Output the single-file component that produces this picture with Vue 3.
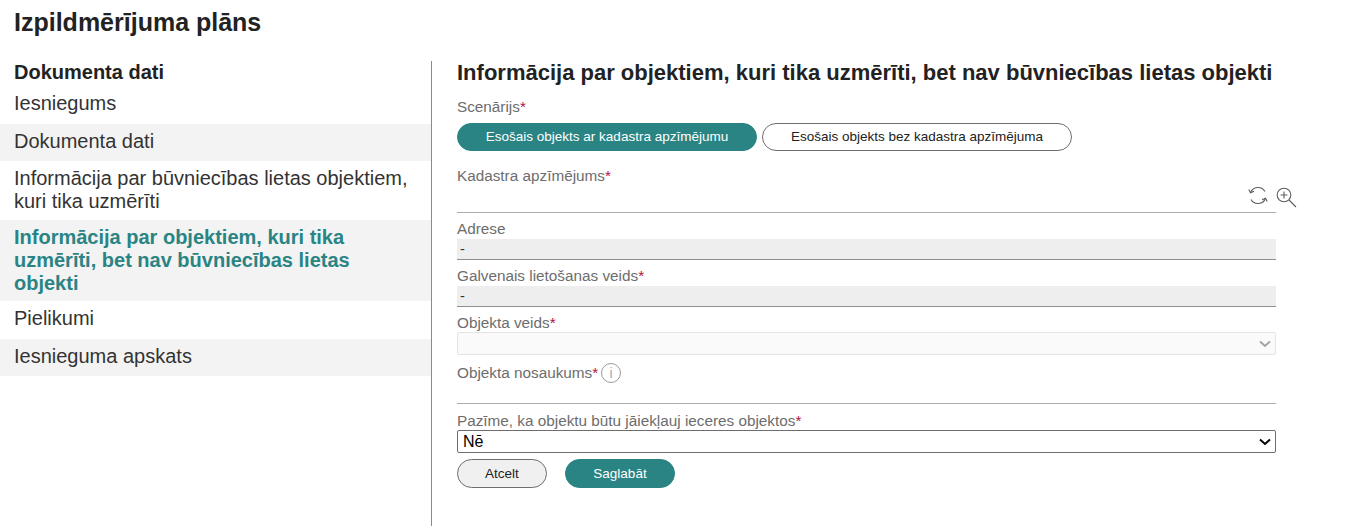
<script setup>
const menu = [
  { text: 'Dokumenta dati', cls: 'h37 shade' },
  { text: 'Informācija par būvniecības lietas objektiem, kuri tika uzmērīti', cls: 'h59' },
  { text: 'Informācija par objektiem, kuri tika uzmērīti, bet nav būvniecības lietas objekti', cls: 'h81 shade active' },
  { text: 'Pielikumi', cls: 'h38' },
  { text: 'Iesnieguma apskats', cls: 'h37 shade' },
]
</script>

<template>
  <div class="page">
    <h1 class="title">Izpildmērījuma plāns</h1>
    <div class="columns">
      <aside class="side">
        <div class="side-head">Dokumenta dati</div>
        <div class="side-first">Iesniegums</div>
        <div v-for="m in menu" :key="m.text" class="item" :class="m.cls">{{ m.text }}</div>
      </aside>
      <main class="main">
        <h2 class="heading">Informācija par objektiem, kuri tika uzmērīti, bet nav būvniecības lietas objekti</h2>
        <div class="label l-scen">Scenārijs<span class="req">*</span></div>
        <div class="pills">
          <button class="pill on">Esošais objekts ar kadastra apzīmējumu</button>
          <button class="pill">Esošais objekts bez kadastra apzīmējuma</button>
        </div>
        <div class="label l-kad">Kadastra apzīmējums<span class="req">*</span></div>
        <div class="line-field kad">
          <div class="tools">
            <svg width="20" height="20" viewBox="0 0 20 20" fill="none" stroke="#5c5c5c" stroke-width="1.1">
              <path d="M2.5 6.8A8 8 0 0 1 17 5.6" />
              <path d="M17.5 12.2A8 8 0 0 1 3 13.4" />
              <path d="M0.8 3.5L2.5 6.8L6 5.2" />
              <path d="M19.2 15.5L17.5 12.2L14 13.8" />
            </svg>
            <svg class="zoom" width="21" height="21" viewBox="0 0 21 21" fill="none" stroke="#5c5c5c" stroke-width="1.1">
              <circle cx="8" cy="8" r="6.8" />
              <path d="M8 4.6V11.4M4.6 8H11.4" />
              <path d="M13 13L20 20" />
            </svg>
          </div>
        </div>
        <div class="label l-adr">Adrese</div>
        <div class="readonly">-</div>
        <div class="label l-gal">Galvenais lietošanas veids<span class="req">*</span></div>
        <div class="readonly">-</div>
        <div class="label l-veids">Objekta veids<span class="req">*</span></div>
        <div class="disabled-select">
          <svg width="12" height="8" viewBox="0 0 12 8" fill="none" stroke="#a3a3a3" stroke-width="2"><path d="M1 1.5L6 6L11 1.5" /></svg>
        </div>
        <div class="label l-nos">
          Objekta nosaukums<span class="req">*</span>
          <span class="info">i</span>
        </div>
        <div class="line-field nos"></div>
        <div class="label l-paz">Pazīme, ka objektu būtu jāiekļauj ieceres objektos<span class="req">*</span></div>
        <div class="select">
          <span>Nē</span>
          <svg width="12" height="8" viewBox="0 0 12 8" fill="none" stroke="#000" stroke-width="2"><path d="M1 1.5L6 6L11 1.5" /></svg>
        </div>
        <div class="actions">
          <button class="btn">Atcelt</button>
          <button class="btn save">Saglabāt</button>
        </div>
      </main>
    </div>
  </div>
</template>

<style>
html, body { margin: 0; background: #fff; }
</style>

<style scoped>
.page {
  height: 526px;
  overflow: hidden;
  font-family: "Liberation Sans", Arial, sans-serif;
  color: #222;
  box-sizing: border-box;
  display: flex;
  flex-direction: column;
}
.title {
  margin: 0;
  padding: 8px 0 0 14px;
  height: 53px;
  box-sizing: border-box;
  font-size: 25px;
  line-height: 28px;
  font-weight: 700;
}
.columns { display: flex; flex: 1; }
.side { width: 431px; flex: none; padding-top: 0; }
.side-head {
  padding: 8px 14px 0;
  height: 31px;
  box-sizing: border-box;
  font-size: 20px;
  line-height: 22px;
  font-weight: 700;
}
.side-first {
  padding: 7px 14px 0;
  height: 33px;
  font-size: 20px;
  line-height: 24px;
  color: #333;
}
.item {
  padding: 6px 14px;
  box-sizing: border-box;
  font-size: 20px;
  line-height: 23px;
  color: #333;
}
.h37 { height: 37px; }
.h38 { height: 38px; }
.h59 { height: 59px; }
.h81 { height: 81px; }
.shade { background: #f3f3f3; }
.active { color: #2a8484; font-weight: 700; }
.main {
  width: 819px;
  margin-top: 8px;
  padding: 0 0 0 25px;
  border-left: 1px solid #8a8a8a;
  flex: none;
  display: flex;
  flex-direction: column;
}
.heading {
  margin: 0;
  height: 36px;
  font-size: 22px;
  line-height: 24px;
  font-weight: 700;
  white-space: nowrap;
}
.label {
  font-size: 15.3px;
  line-height: 18px;
  color: #6d6d6d;
  white-space: nowrap;
}
.req { color: #b0123f; }
.l-scen { height: 26px; padding-top: 1px; box-sizing: border-box; }
.pills { display: flex; gap: 5px; height: 28px; }
.pill {
  width: 300px;
  height: 28px;
  box-sizing: border-box;
  border: 1px solid #6d6d6d;
  border-radius: 14px;
  background: #fff;
  color: #222;
  font: 13.5px/18px "Liberation Sans", Arial, sans-serif;
  padding: 0;
}
.pill + .pill { width: 310px; }
.pill.on { background: #2a8484; border-color: #2a8484; color: #fff; }
.l-kad { margin-top: 16px; height: 18px; }
.line-field { border-bottom: 1px solid #ababab; box-sizing: content-box; }
.kad { height: 27px; position: relative; }
.tools {
  position: absolute;
  left: 791px;
  top: 1px;
  display: flex;
  gap: 8px;
  align-items: flex-start;
}
.zoom { margin-top: 1px; }
.l-adr { margin-top: 7px; height: 18px; }
.readonly {
  height: 21px;
  box-sizing: border-box;
  margin-top: 1px;
  background: #eeeeee;
  border-bottom: 1px solid #8f8f8f;
  font-size: 14.67px;
  line-height: 21px;
  padding-left: 3px;
  color: #333;
}
.l-gal { margin-top: 7px; height: 18px; }
.l-veids { margin-top: 7px; height: 18px; }
.disabled-select {
  height: 23px;
  width: 819px;
  box-sizing: border-box;
  border: 1px solid #e4e4e4;
  border-radius: 2px;
  background: #fafafa;
  display: flex;
  align-items: center;
  justify-content: flex-end;
  padding-right: 4px;
}
.l-nos { margin-top: 6px; height: 24px; display: flex; align-items: center; }
.info {
  margin-left: 3px;
  width: 20px;
  height: 20px;
  box-sizing: border-box;
  border: 1px solid #9a9a9a;
  border-radius: 50%;
  font-size: 14px;
  line-height: 18px;
  text-align: center;
  color: #a8a8a8;
}
.nos { height: 18px; }
.l-paz { margin-top: 8px; height: 18px; }
.select {
  height: 23px;
  box-sizing: border-box;
  border: 1px solid #6d6d6d;
  border-radius: 2px;
  display: flex;
  align-items: center;
  justify-content: space-between;
  padding: 0 4px 0 5px;
  font-size: 16px;
  color: #000;
}
.actions { display: flex; gap: 18px; margin-top: 6px; }
.btn {
  width: 90px;
  height: 29px;
  box-sizing: border-box;
  border: 1px solid #6d6d6d;
  border-radius: 14.5px;
  background: #f0f0f0;
  color: #222;
  font: 13.5px/18px "Liberation Sans", Arial, sans-serif;
  padding: 0;
}
.btn.save { width: 110px; background: #2a8484; border-color: #2a8484; color: #fff; }
</style>
